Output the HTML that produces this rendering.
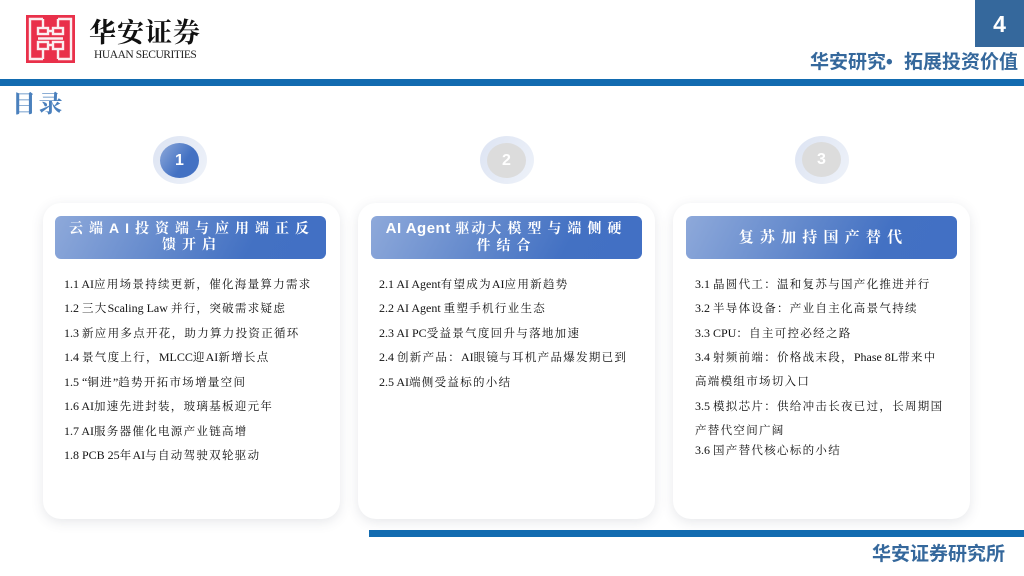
<!DOCTYPE html>
<html lang="zh"><head><meta charset="utf-8"><style>
html,body{margin:0;padding:0;background:#fff}
#p{position:relative;width:1024px;height:576px;overflow:hidden;background:#fff;font-family:"Liberation Serif","Noto Serif CJK SC",serif}
#p div{position:absolute;white-space:nowrap}
.b{font-family:"Liberation Sans","Noto Sans CJK SC",sans-serif;font-weight:700}
.card{top:203px;width:297px;height:316px;border-radius:18px;background:#fff;box-shadow:0 3px 12px rgba(60,70,90,.13)}
.hd{top:216px;width:271px;height:43px;border-radius:6px;background:linear-gradient(118deg,#8ea9da 0%,#5f86cb 45%,#4371c3 72%,#4270c4 100%)}
.t{color:#fff;font-size:14px;line-height:16px;text-align:center;font-weight:700;font-family:"Liberation Sans","Noto Serif CJK SC",serif}
.l{font-size:11.5px;line-height:14px;color:#111;letter-spacing:1.3px}
.l i{font-style:normal;font-size:12px;letter-spacing:0}
.o{width:54px;height:48px;border-radius:50%;background:linear-gradient(120deg,#dde4f3,#eef2f9)}
.i{width:39px;height:35px;border-radius:50%;background:#dcdcdc;color:#fff;font:700 16px/35px "Liberation Sans",sans-serif;text-align:center}
</style></head><body><div id="p">
<div style="left:26px;top:15px;width:49px;height:48px;background:#e9304a"></div>
<svg style="position:absolute;left:26px;top:15px" width="49" height="48" viewBox="0 0 49 48" fill="none" stroke="#fbeef0" stroke-width="2.4"><path d="M17 4H4V44H17M32 4H45V44H32M17 4V13M32 4V13M17 34V44M32 34V44M12 23.500H37M22 16H27M22 30H27"/><rect x="12" y="13" width="10" height="6"/><rect x="27" y="13" width="10" height="6"/><rect x="12" y="27" width="10" height="7"/><rect x="27" y="27" width="10" height="7"/></svg>
<div style="left:89px;top:14px;font:700 27px/34px 'Noto Serif CJK SC',serif;color:#111;letter-spacing:1px">华安证券</div>
<div style="left:94px;top:48px;font:11.5px/14px 'Liberation Serif',serif;color:#222;letter-spacing:-.45px">HUAAN SECURITIES</div>
<div style="left:975px;top:0;width:49px;height:47px;background:#35689c;color:#fff;font:700 23px/49px 'Liberation Sans',sans-serif;text-align:center">4</div>
<div class="b" style="left:810px;top:51px;font-size:19px;line-height:24px;color:#35689c">华安研究<span style="display:inline-block;width:18px">•</span>拓展投资价值</div>
<div style="left:0;top:79px;width:1024px;height:7px;background:#126bb0"></div>
<div style="left:12px;top:87px;font:700 24px/30px 'Noto Serif CJK SC',serif;color:#4a80bd;letter-spacing:2.5px">目录</div>

<div class="o" style="left:153px;top:136px"></div>
<div class="i" style="left:160px;top:143px;background:linear-gradient(125deg,#8ea9da,#4371c3 60%)">1</div>
<div class="o" style="left:480px;top:136px"></div>
<div class="i" style="left:487px;top:143px">2</div>
<div class="o" style="left:795px;top:136px"></div>
<div class="i" style="left:802px;top:142px">3</div>

<div class="card" style="left:43px"></div>
<div class="card" style="left:358px"></div>
<div class="card" style="left:673px"></div>
<div class="hd" style="left:55px"></div>
<div class="hd" style="left:371px"></div>
<div class="hd" style="left:686px"></div>

<div class="t" style="left:56.500px;top:220px;width:271px;letter-spacing:6px">云端AI投资端与应用端正反<br>馈开启</div>
<div class="t" style="left:371px;top:220px;width:271px;letter-spacing:6px"><span style="font-size:15px;letter-spacing:.5px;font-family:'Liberation Sans',sans-serif">AI Agent </span><span style="letter-spacing:2px">驱动</span>大模型与端侧硬<br>件结合</div>
<div class="t" style="left:688px;top:230px;width:271px;font-size:15px;letter-spacing:6.2px">复苏加持国产替代</div>

<div class="l" style="left:64px;top:277px"><i>1.1 AI</i>应用场景持续更新，催化海量算力需求</div>
<div class="l" style="left:64px;top:301px"><i>1.2 </i>三大<i>Scaling Law </i>并行，突破需求疑虑</div>
<div class="l" style="left:64px;top:326px"><i>1.3 </i>新应用多点开花，助力算力投资正循环</div>
<div class="l" style="left:64px;top:350px"><i>1.4 </i>景气度上行，<i>MLCC</i>迎<i>AI</i>新增长点</div>
<div class="l" style="left:64px;top:375px"><i>1.5 “</i>铜进<i>”</i>趋势开拓市场增量空间</div>
<div class="l" style="left:64px;top:399px"><i>1.6 AI</i>加速先进封装，玻璃基板迎元年</div>
<div class="l" style="left:64px;top:424px"><i>1.7 AI</i>服务器催化电源产业链高增</div>
<div class="l" style="left:64px;top:448px"><i>1.8 PCB 25</i>年<i>AI</i>与自动驾驶双轮驱动</div>

<div class="l" style="left:379px;top:277px"><i>2.1 AI Agent</i>有望成为<i>AI</i>应用新趋势</div>
<div class="l" style="left:379px;top:301px"><i>2.2 AI Agent </i>重塑手机行业生态</div>
<div class="l" style="left:379px;top:326px"><i>2.3 AI PC</i>受益景气度回升与落地加速</div>
<div class="l" style="left:379px;top:350px"><i>2.4 </i>创新产品：<i>AI</i>眼镜与耳机产品爆发期已到</div>
<div class="l" style="left:379px;top:375px"><i>2.5 AI</i>端侧受益标的小结</div>

<div class="l" style="left:695px;top:277px"><i>3.1 </i>晶圆代工：温和复苏与国产化推进并行</div>
<div class="l" style="left:695px;top:301px"><i>3.2 </i>半导体设备：产业自主化高景气持续</div>
<div class="l" style="left:695px;top:326px"><i>3.3 CPU</i>：自主可控必经之路</div>
<div class="l" style="left:695px;top:350px"><i>3.4 </i>射频前端：价格战末段，<i>Phase 8L</i>带来中</div>
<div class="l" style="left:695px;top:375px">高端模组市场切入口</div>
<div class="l" style="left:695px;top:399px"><i>3.5 </i>模拟芯片：供给冲击长夜已过，长周期国</div>
<div class="l" style="left:695px;top:424px">产替代空间广阔</div>
<div class="l" style="left:695px;top:443px"><i>3.6 </i>国产替代核心标的小结</div>

<div style="left:369px;top:530px;width:655px;height:7px;background:#126bb0"></div>
<div class="b" style="left:872px;top:543px;font-size:19px;line-height:24px;color:#35689c">华安证券研究所</div>
</div></body></html>
